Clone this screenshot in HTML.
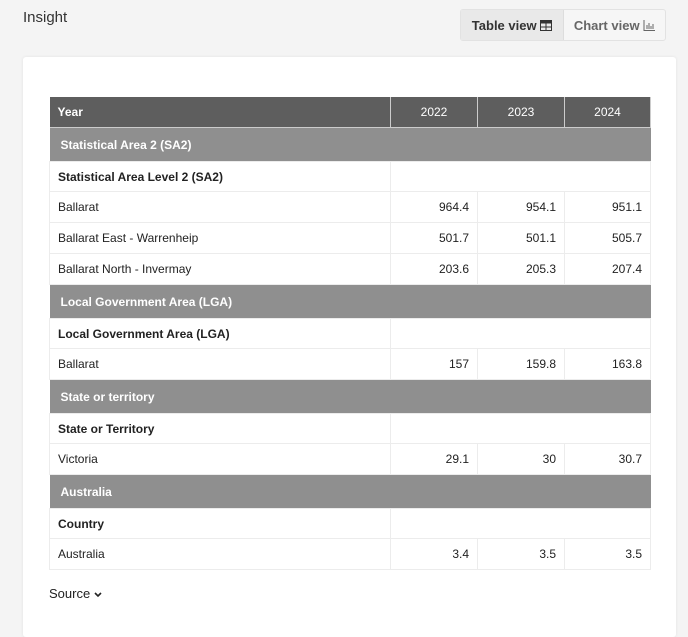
<!DOCTYPE html>
<html><head><style>
body{margin:0;width:688px;height:626px;background:#f4f4f4;font-family:"Liberation Sans",sans-serif;position:relative;overflow:hidden;color:#222}
.title{position:absolute;left:23px;top:9px;font-size:15px;color:#333}
.tog{position:absolute;left:460px;top:9px;width:204px;height:30px;border:1px solid #e2e2e2;border-radius:3px;background:#f6f6f6;display:flex;font-size:13px;font-weight:bold}
.tog div{display:flex;align-items:center;justify-content:center}
.t1{width:102px;background:#e9e9e9;color:#333;border-right:1px solid #ddd}
.t2{flex:1;color:#666}
.card{position:absolute;left:23px;top:57px;width:653px;height:580px;background:#fff;border-radius:3px;box-shadow:0 0 3px rgba(0,0,0,.08)}
table{position:absolute;left:49px;top:97px;width:602px;border-collapse:collapse;font-size:12px}
td{padding:0 8px;border:1px solid #ececec}
col.a{width:341px}col.b{width:87px}
tr.h td{background:#5e5e5e;color:#fff;font-weight:normal;height:30px;border:1px solid #ccc;border-top:none;text-align:center}
tr.h td:first-child{text-align:left;border-left:none;font-weight:bold}
tr.g td{background:#8f8f8f;color:#fff;font-weight:bold;height:33px;padding-left:11px;border:none}
tr.s td{height:29px;font-weight:bold}
tr.d td{height:30px}
tr.d td+td{text-align:right}
.src{position:absolute;left:49px;top:586px;font-size:13px;color:#222}
</style></head><body>
<div class="title">Insight</div>
<div class="tog"><div class="t1">Table view&nbsp;<svg width="12" height="11" viewBox="0 0 12 11"><rect x="0.5" y="0.5" width="11" height="10" fill="none" stroke="#333"/><rect x="0.5" y="0.5" width="11" height="3" fill="#333"/><line x1="6" y1="3" x2="6" y2="11" stroke="#333"/><line x1="0" y1="7" x2="12" y2="7" stroke="#333"/></svg></div><div class="t2">Chart view&nbsp;<svg width="12" height="11" viewBox="0 0 12 11" stroke="#666" fill="none"><path d="M1 0V10.5H12M4 9V5M6 9V3M8 9V6M10 9V4"/></svg></div></div>
<div class="card"></div>
<table>
<colgroup><col class="a"><col class="b"><col class="b"><col></colgroup>
<tr class="h"><td>Year</td><td>2022</td><td>2023</td><td>2024</td></tr>
<tr class="g"><td colspan="4">Statistical Area 2 (SA2)</td></tr>
<tr class="s"><td>Statistical Area Level 2 (SA2)</td><td colspan="3"></td></tr>
<tr class="d"><td>Ballarat</td><td>964.4</td><td>954.1</td><td>951.1</td></tr>
<tr class="d"><td>Ballarat East - Warrenheip</td><td>501.7</td><td>501.1</td><td>505.7</td></tr>
<tr class="d"><td>Ballarat North - Invermay</td><td>203.6</td><td>205.3</td><td>207.4</td></tr>
<tr class="g"><td colspan="4">Local Government Area (LGA)</td></tr>
<tr class="s"><td>Local Government Area (LGA)</td><td colspan="3"></td></tr>
<tr class="d"><td>Ballarat</td><td>157</td><td>159.8</td><td>163.8</td></tr>
<tr class="g"><td colspan="4">State or territory</td></tr>
<tr class="s"><td>State or Territory</td><td colspan="3"></td></tr>
<tr class="d"><td>Victoria</td><td>29.1</td><td>30</td><td>30.7</td></tr>
<tr class="g"><td colspan="4">Australia</td></tr>
<tr class="s"><td>Country</td><td colspan="3"></td></tr>
<tr class="d"><td>Australia</td><td>3.4</td><td>3.5</td><td>3.5</td></tr>
</table>
<div class="src">Source <svg width="8" height="6" viewBox="0 0 8 6"><path d="M1 1L4 4L7 1" stroke="#222" stroke-width="1.6" fill="none"/></svg></div>
</body></html>
